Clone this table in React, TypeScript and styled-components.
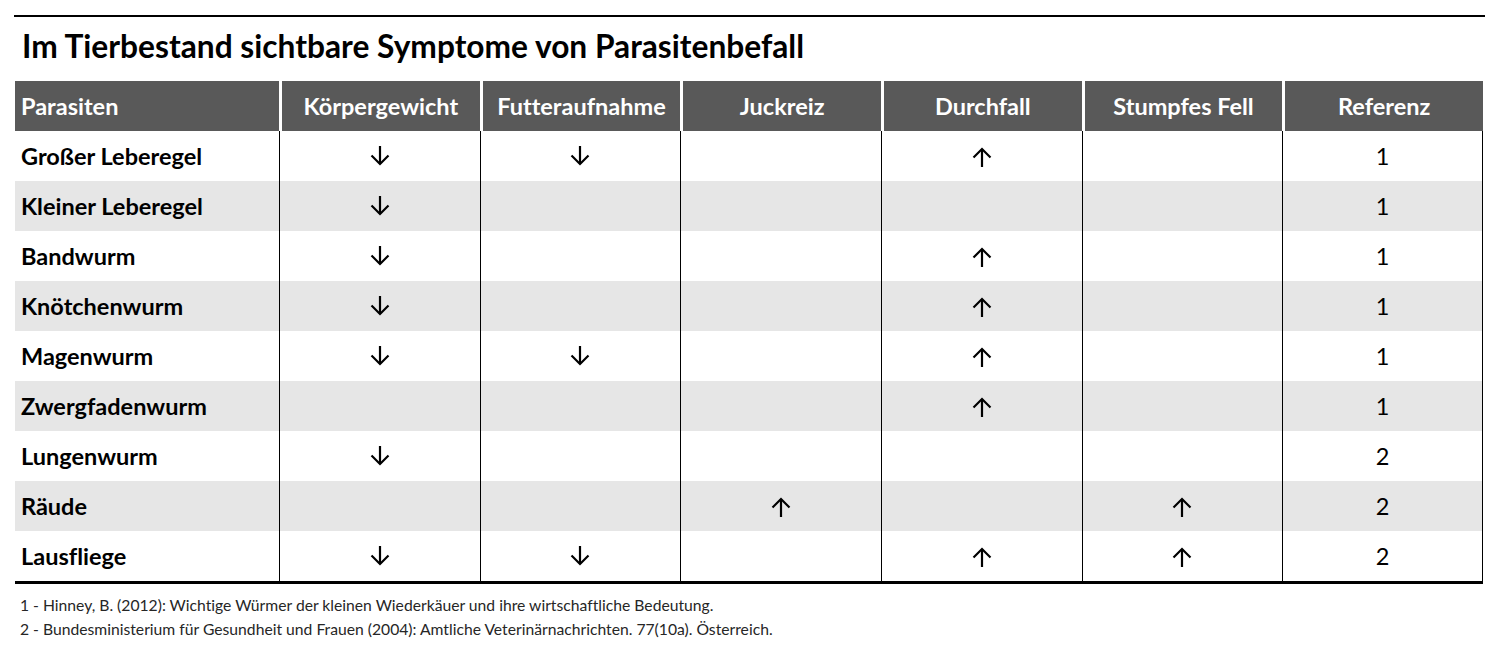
import styled, { createGlobalStyle } from 'styled-components';

const GlobalStyle = createGlobalStyle`
  html, body {
    margin: 0;
    padding: 0;
    background: #ffffff;
  }
  body {
    font-family: Lato, "Liberation Sans", sans-serif;
    font-variant-ligatures: no-common-ligatures;
    color: #000000;
  }
`;

const Page = styled.div`
  width: 1468px;
  padding: 15px 0 0 15px;
`;

const TopRule = styled.div`
  height: 2px;
  background: #000000;
  margin-left: -1px;
  margin-right: -2px;
`;

const Title = styled.h1`
  margin: 0;
  padding: 10px 0 0 7px;
  height: 64px;
  box-sizing: border-box;
  font-size: 31.7px;
  font-weight: 700;
  line-height: 38px;
  white-space: nowrap;
`;

const Grid = styled.div`
  display: grid;
  grid-template-columns: 264px repeat(6, 1fr);
  border-bottom: 3px solid #000000;
`;

const HeadCell = styled.div<{ $left?: boolean }>`
  height: 50px;
  display: flex;
  align-items: center;
  justify-content: ${(p) => (p.$left ? 'flex-start' : 'center')};
  padding-left: ${(p) => (p.$left ? '6px' : '0')};
  background: #595959;
  color: #ffffff;
  font-size: 23.5px;
  font-weight: 700;
  border-left: ${(p) => (p.$left ? 'none' : '3px solid #ffffff')};
  box-sizing: border-box;
`;

const Cell = styled.div<{ $first?: boolean; $last?: boolean; $shade: boolean }>`
  height: 50px;
  display: flex;
  align-items: center;
  justify-content: ${(p) => (p.$first ? 'flex-start' : 'center')};
  padding-left: ${(p) => (p.$first ? '6px' : '0')};
  background: ${(p) => (p.$shade ? '#e6e6e6' : '#ffffff')};
  border-left: ${(p) => (p.$first ? 'none' : '1px solid #000000')};
  border-right: ${(p) => (p.$last ? '1px solid #000000' : 'none')};
  font-size: 23.5px;
  font-weight: ${(p) => (p.$first ? 700 : 400)};
  box-sizing: border-box;
`;

const Notes = styled.div`
  padding: 9px 0 0 5px;
  font-size: 15.7px;
  line-height: 24px;
  color: #262626;
  white-space: nowrap;
`;

function Arrow({ dir }: { dir: 'up' | 'down' }) {
  return (
    <svg
      width="20"
      height="21"
      viewBox="0 0 20 21"
      fill="none"
      stroke="#000"
      strokeWidth="2.2"
      style={{ transform: dir === 'up' ? 'rotate(180deg)' : undefined, marginTop: dir === 'up' ? '2px' : '-2px' }}
    >
      <path d="M10 1 V19" />
      <path d="M1.5 10.5 L10 19 L18.5 10.5" />
    </svg>
  );
}

type Mark = '' | 'u' | 'd';

const headers = ['Körpergewicht', 'Futteraufnahme', 'Juckreiz', 'Durchfall', 'Stumpfes Fell'];

const rows: { name: string; marks: Mark[]; ref: string }[] = [
  { name: 'Großer Leberegel', marks: ['d', 'd', '', 'u', ''], ref: '1' },
  { name: 'Kleiner Leberegel', marks: ['d', '', '', '', ''], ref: '1' },
  { name: 'Bandwurm', marks: ['d', '', '', 'u', ''], ref: '1' },
  { name: 'Knötchenwurm', marks: ['d', '', '', 'u', ''], ref: '1' },
  { name: 'Magenwurm', marks: ['d', 'd', '', 'u', ''], ref: '1' },
  { name: 'Zwergfadenwurm', marks: ['', '', '', 'u', ''], ref: '1' },
  { name: 'Lungenwurm', marks: ['d', '', '', '', ''], ref: '2' },
  { name: 'Räude', marks: ['', '', 'u', '', 'u'], ref: '2' },
  { name: 'Lausfliege', marks: ['d', 'd', '', 'u', 'u'], ref: '2' },
];

export default function App() {
  return (
    <>
      <GlobalStyle />
      <Page>
        <TopRule />
        <Title>Im Tierbestand sichtbare Symptome von Parasitenbefall</Title>
        <Grid>
          <HeadCell $left>Parasiten</HeadCell>
          {headers.map((h) => (
            <HeadCell key={h}>{h}</HeadCell>
          ))}
          <HeadCell>Referenz</HeadCell>
          {rows.map((r, i) => {
            const shade = i % 2 === 1;
            return [
              <Cell key={r.name} $first $shade={shade}>
                {r.name}
              </Cell>,
              ...r.marks.map((m, j) => (
                <Cell key={r.name + j} $shade={shade}>
                  {m === 'u' && <Arrow dir="up" />}
                  {m === 'd' && <Arrow dir="down" />}
                </Cell>
              )),
              <Cell key={r.name + 'ref'} $last $shade={shade}>
                {r.ref}
              </Cell>,
            ];
          })}
        </Grid>
        <Notes>
          <div>1 - Hinney, B. (2012): Wichtige Würmer der kleinen Wiederkäuer und ihre wirtschaftliche Bedeutung.</div>
          <div>2 - Bundesministerium für Gesundheit und Frauen (2004): Amtliche Veterinärnachrichten. 77(10a). Österreich.</div>
        </Notes>
      </Page>
    </>
  );
}
